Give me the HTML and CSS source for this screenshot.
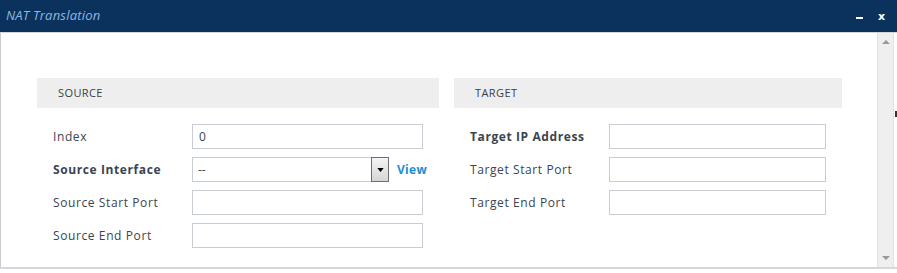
FILE: index.html
```html
<!DOCTYPE html>
<html lang="en">
<head>
  <title>NAT Translation</title>
  <meta charset="utf-8">
  <link rel="stylesheet" href="styles.css">
</head>
<body>
  <div class="dialog">
    <div class="dialog-title">
      <span class="dialog-caption">NAT Translation</span>
      <span class="dialog-actions">
        <span class="dialog-min"></span>
        <span class="dialog-close">x</span>
      </span>
    </div>

    <div class="dialog-body">
      <div class="dialog-main">
        <div class="panels">
          <section class="panel panel-source">
            <h2 class="panel-head">SOURCE</h2>
            <div class="form-rows">
              <div class="form-row">
                <label class="form-label">Index</label>
                <input class="field" type="text" value="0">
              </div>
              <div class="form-row">
                <label class="form-label form-label-bold">Source Interface</label>
                <div class="select-wrap">
                  <div class="select">
                    <span class="select-value">--</span>
                    <span class="select-btn">
                      <svg viewBox="0 0 8 5" aria-hidden="true"><path d="M0 0h8L4 5z"/></svg>
                    </span>
                  </div>
                  <a class="view-link" href="#">View</a>
                </div>
              </div>
              <div class="form-row">
                <label class="form-label">Source Start Port</label>
                <input class="field" type="text">
              </div>
              <div class="form-row">
                <label class="form-label">Source End Port</label>
                <input class="field" type="text">
              </div>
            </div>
          </section>

          <section class="panel panel-target">
            <h2 class="panel-head">TARGET</h2>
            <div class="form-rows">
              <div class="form-row">
                <label class="form-label form-label-bold">Target IP Address</label>
                <input class="field" type="text">
              </div>
              <div class="form-row">
                <label class="form-label">Target Start Port</label>
                <input class="field" type="text">
              </div>
              <div class="form-row">
                <label class="form-label">Target End Port</label>
                <input class="field" type="text">
              </div>
            </div>
          </section>
        </div>
      </div>

      <div class="scrollbar">
        <span class="scroll-arrow scroll-up"></span>
        <span class="scroll-arrow scroll-down"></span>
      </div>
      <div class="edge">
        <span class="edge-mark"></span>
      </div>
    </div>

    <div class="dialog-foot"></div>
  </div>
</body>
</html>
```

FILE: styles.css
```css
*, *::before, *::after {
  margin: 0;
  padding: 0;
  box-sizing: border-box;
}

html {
  font-size: 12px;
}

body {
  width: 897px;
  height: 273px;
  overflow: hidden;
  background-color: #FFFFFF;
  color: #3B4450;
  font-family: "Open Sans", "DejaVu Sans", sans-serif;
}

.dialog {
  display: flex;
  flex-direction: column;
  height: 273px;
}

.dialog-title {
  display: flex;
  align-items: center;
  justify-content: space-between;
  height: 32px;
  padding: 0 12px 3px 6px;
  background-color: #0B325C;
}

.dialog-caption {
  color: #8DB6E4;
  font-size: 13px;
  font-style: italic;
  letter-spacing: 0.2px;
}

.dialog-actions {
  display: flex;
  align-items: center;
  gap: 15px;
  padding-top: 3px;
}

.dialog-min {
  width: 7px;
  height: 2px;
  margin-top: 3px;
  background-color: #FFFFFF;
}

.dialog-close {
  color: #FFFFFF;
  font-family: "DejaVu Sans", sans-serif;
  font-size: 11px;
  font-weight: bold;
  line-height: 1;
}

.dialog-body {
  display: flex;
  height: 235px;
  border-top: 1px solid #D3D6DA;
}

.dialog-main {
  flex: 1;
  border-left: 1px solid #C9CDD2;
  padding: 45px 0 0 36px;
}

.panels {
  display: flex;
  gap: 15px;
}

.panel-source {
  width: 402px;
}

.panel-target {
  width: 388px;
}

.panel-head {
  height: 30px;
  padding-left: 21px;
  background-color: #EEEEEE;
  color: #3A3F45;
  font-size: 11px;
  font-weight: normal;
  letter-spacing: 0.4px;
  line-height: 30px;
}

.form-rows {
  display: flex;
  flex-direction: column;
  gap: 8px;
  padding: 16px 0 0 16px;
}

.form-row {
  display: flex;
  align-items: center;
  height: 25px;
}

.form-label {
  width: 139px;
  flex: none;
  font-size: 12px;
  letter-spacing: 0.6px;
}

.form-label-bold {
  font-weight: bold;
  letter-spacing: 0.6px;
}

.field {
  width: 231px;
  height: 25px;
  padding: 0 6px;
  border: 1px solid #C8CDD3;
  background-color: #FFFFFF;
  color: #3B4450;
  font-family: inherit;
  font-size: 12px;
  outline: none;
}

.panel-target .field {
  width: 217px;
}

.select-wrap {
  display: flex;
  align-items: center;
  gap: 8px;
}

.select {
  display: flex;
  align-items: center;
  justify-content: space-between;
  width: 197px;
  height: 25px;
  padding-left: 5px;
  border: 1px solid #C8CDD3;
}

.select-value {
  font-size: 12px;
}

.select-btn {
  display: flex;
  align-items: center;
  justify-content: center;
  width: 18px;
  height: 25px;
  margin: -1px -1px -1px 0;
  border: 1px solid #6E6E6E;
  background: linear-gradient(#F4F4F4, #D6D6D6);
}

.select-btn svg {
  width: 7px;
  height: 4px;
  fill: #000000;
}

.view-link {
  color: #1A8ED6;
  font-size: 12px;
  font-weight: bold;
  letter-spacing: 0.3px;
  text-decoration: none;
}

.scrollbar {
  display: flex;
  flex-direction: column;
  justify-content: space-between;
  align-items: center;
  width: 17px;
  padding: 7px 0 7px;
  border-left: 1px solid #E2E2E2;
  border-right: 1px solid #E2E2E2;
  background-color: #EFEFEF;
}

.scroll-arrow {
  width: 0;
  height: 0;
  border-left: 4px solid transparent;
  border-right: 4px solid transparent;
}

.scroll-up {
  border-bottom: 4px solid #9A9A9A;
}

.scroll-down {
  border-top: 4px solid #9A9A9A;
}

.edge {
  width: 3px;
  padding-top: 78px;
  background-color: #FFFFFF;
}

.edge-mark {
  display: block;
  width: 2px;
  height: 6px;
  margin-left: 1px;
  background-color: #333333;
}

.dialog-foot {
  flex: 1;
  border-top: 2px solid #D5D8DB;
}
```
